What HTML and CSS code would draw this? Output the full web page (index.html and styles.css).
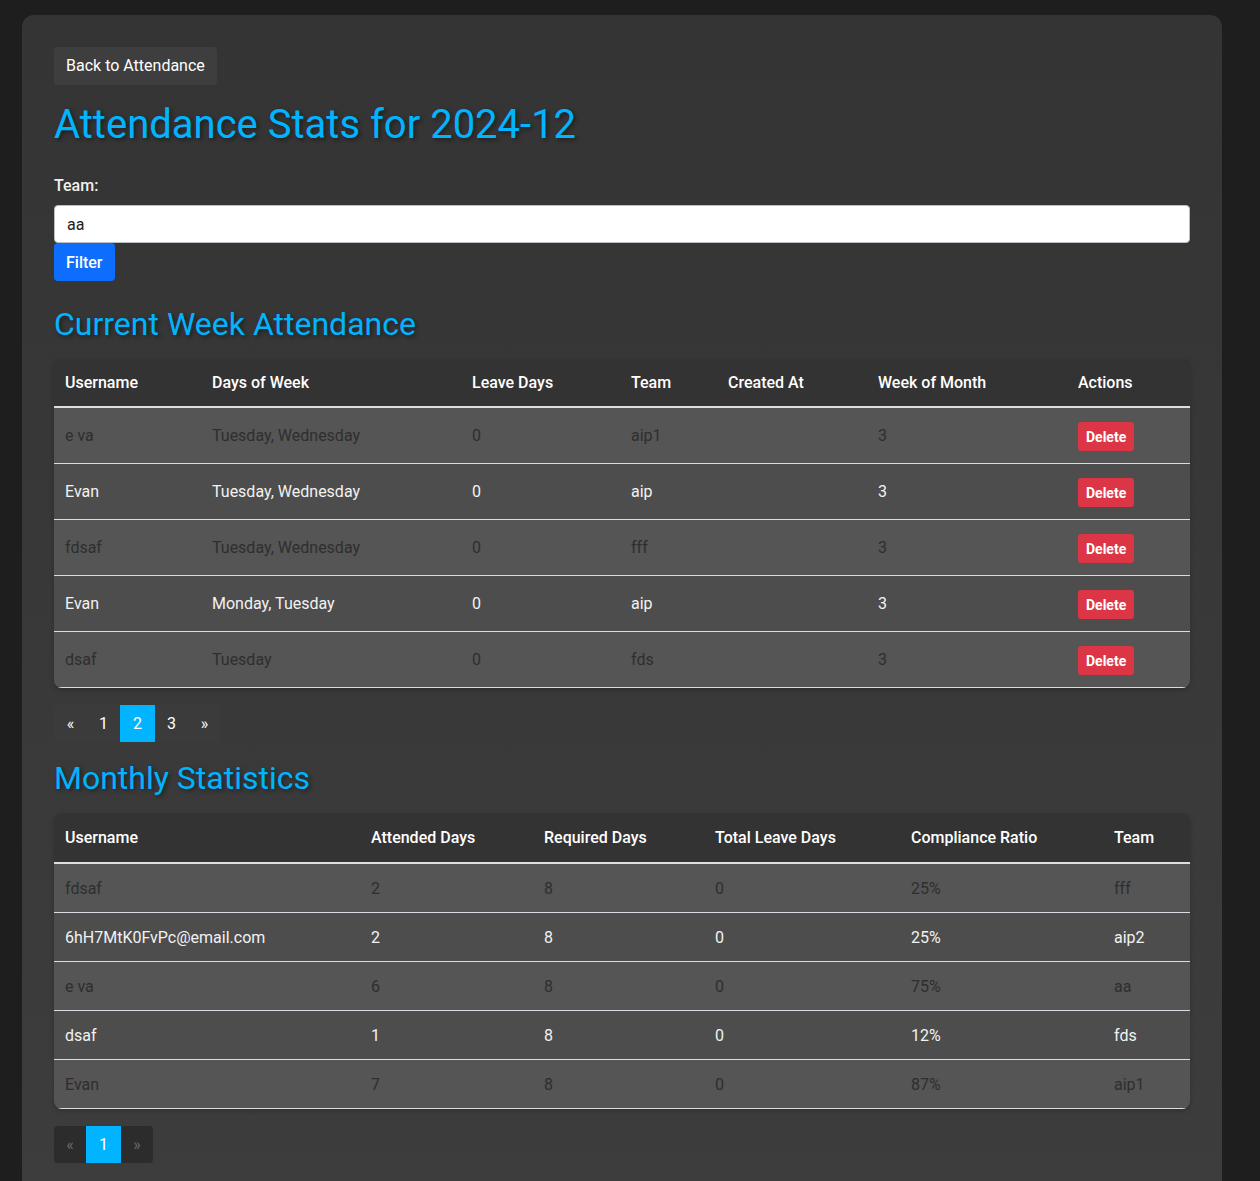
FILE: index.html
```html
<!DOCTYPE html>
<html lang="en">
<head>
<meta charset="utf-8">
<title>Attendance Stats</title>
<link rel="stylesheet" href="styles.css">
</head>
<body>
<div class="container">
  <a class="back-btn" href="#">Back to Attendance</a>
  <h1 class="title">Attendance Stats for 2024-12</h1>

  <form class="filter-form">
    <label class="label" for="team">Team:</label>
    <input class="input" id="team" type="text" value="aa">
    <button class="filter-btn" type="button">Filter</button>
  </form>

  <h2 class="section-title">Current Week Attendance</h2>
  <div class="table-wrap">
    <table class="table week">
      <thead>
        <tr>
          <th class="c1">Username</th>
          <th class="c2">Days of Week</th>
          <th class="c3">Leave Days</th>
          <th class="c4">Team</th>
          <th class="c5">Created At</th>
          <th class="c6">Week of Month</th>
          <th class="c7">Actions</th>
        </tr>
      </thead>
      <tbody>
        <tr class="odd"><td>e va</td><td>Tuesday, Wednesday</td><td>0</td><td>aip1</td><td></td><td>3</td><td><button class="del-btn">Delete</button></td></tr>
        <tr class="even"><td>Evan</td><td>Tuesday, Wednesday</td><td>0</td><td>aip</td><td></td><td>3</td><td><button class="del-btn">Delete</button></td></tr>
        <tr class="odd"><td>fdsaf</td><td>Tuesday, Wednesday</td><td>0</td><td>fff</td><td></td><td>3</td><td><button class="del-btn">Delete</button></td></tr>
        <tr class="even"><td>Evan</td><td>Monday, Tuesday</td><td>0</td><td>aip</td><td></td><td>3</td><td><button class="del-btn">Delete</button></td></tr>
        <tr class="odd"><td>dsaf</td><td>Tuesday</td><td>0</td><td>fds</td><td></td><td>3</td><td><button class="del-btn">Delete</button></td></tr>
      </tbody>
    </table>
  </div>

  <nav class="pagination">
    <a class="page" href="#">«</a>
    <a class="page" href="#">1</a>
    <a class="page active" href="#">2</a>
    <a class="page" href="#">3</a>
    <a class="page" href="#">»</a>
  </nav>

  <h2 class="section-title monthly">Monthly Statistics</h2>
  <div class="table-wrap">
    <table class="table month">
      <thead>
        <tr>
          <th class="m1">Username</th>
          <th class="m2">Attended Days</th>
          <th class="m3">Required Days</th>
          <th class="m4">Total Leave Days</th>
          <th class="m5">Compliance Ratio</th>
          <th class="m6">Team</th>
        </tr>
      </thead>
      <tbody>
        <tr class="odd"><td>fdsaf</td><td>2</td><td>8</td><td>0</td><td>25%</td><td>fff</td></tr>
        <tr class="even"><td>6hH7MtK0FvPc@email.com</td><td>2</td><td>8</td><td>0</td><td>25%</td><td>aip2</td></tr>
        <tr class="odd"><td>e va</td><td>6</td><td>8</td><td>0</td><td>75%</td><td>aa</td></tr>
        <tr class="even"><td>dsaf</td><td>1</td><td>8</td><td>0</td><td>12%</td><td>fds</td></tr>
        <tr class="odd"><td>Evan</td><td>7</td><td>8</td><td>0</td><td>87%</td><td>aip1</td></tr>
      </tbody>
    </table>
  </div>

  <nav class="pagination disabled-ends">
    <span class="page disabled">«</span>
    <a class="page active" href="#">1</a>
    <span class="page disabled">»</span>
  </nav>
</div>
</body>
</html>
```

FILE: styles.css
```css
html, body {
  margin: 0;
  padding: 0;
}

body {
  background: #1e1e1e;
  font-family: Roboto, "Liberation Sans", Arial, sans-serif;
  font-size: 16px;
  color: #f0f0f0;
  min-height: 1181px;
}

.container {
  width: 1200px;
  box-sizing: border-box;
  margin: 15px 0 0 22px;
  padding: 32px 32px 40px;
  background: linear-gradient(180deg, #343434 0%, #3d3d3d 100%);
  border-radius: 12px;
  min-height: 1200px;
}

.back-btn {
  display: inline-block;
  background: #3e3e3e;
  color: #ffffff;
  text-decoration: none;
  padding: 9px 12px 10px;
  line-height: 19px;
  border-radius: 4px;
}

.title {
  margin: 17px 0 0;
  font-size: 40px;
  line-height: 46px;
  font-weight: 400;
  color: #00b4ff;
  text-shadow: 2px 2px 4px rgba(0, 0, 0, 0.45);
}

.filter-form {
  margin-top: 28px;
  display: flex;
  flex-direction: column;
  align-items: flex-start;
}

.label {
  font-weight: 500;
  line-height: 19px;
  margin-bottom: 10px;
}

.input {
  box-sizing: border-box;
  width: 100%;
  height: 38px;
  padding: 0 12px;
  border: 1px solid #b9bdc4;
  border-radius: 4px;
  background: #ffffff;
  color: #212121;
  font-family: inherit;
  font-size: 16px;
}

.filter-btn {
  height: 38px;
  padding: 0 12px;
  background: #0d6efd;
  color: #ffffff;
  border: none;
  border-radius: 4px;
  font-family: inherit;
  font-size: 16px;
  font-weight: 500;
}

.section-title {
  margin: 24px 0 0;
  font-size: 32px;
  line-height: 38px;
  font-weight: 400;
  color: #00b4ff;
  text-shadow: 2px 2px 4px rgba(0, 0, 0, 0.45);
}

.section-title.monthly {
  margin-top: 17px;
}

.table-wrap {
  margin-top: 16px;
  border-radius: 8px;
  overflow: hidden;
  box-shadow: 0 2px 5px rgba(0, 0, 0, 0.2);
}

.table {
  width: 100%;
  border-collapse: collapse;
  font-size: 16px;
}

.table th {
  background: #333333;
  color: #ffffff;
  font-weight: 500;
  text-align: left;
  padding: 0 11px;
  height: 47px;
  border-bottom: 2px solid #dedede;
}

.table.month th {
  height: 49px;
}

.table td {
  padding: 0 11px;
  text-align: left;
  border-bottom: 1px solid #d8dde3;
}

.table.week td {
  height: 55px;
}

.table.month td {
  height: 48px;
}

.table tr.odd td {
  background: #555555;
  color: #2e2e2e;
}

.table tr.even td {
  background: #4d4d4d;
  color: #f2f2f2;
}

.c1 { width: 125px; }
.c2 { width: 238px; }
.c3 { width: 137px; }
.c4 { width: 75px; }
.c5 { width: 128px; }
.c6 { width: 178px; }

.m1 { width: 284px; }
.m2 { width: 151px; }
.m3 { width: 149px; }
.m4 { width: 174px; }
.m5 { width: 181px; }

.del-btn {
  display: inline-block;
  background: #dc3545;
  color: #ffffff;
  border: none;
  border-radius: 3px;
  font-family: inherit;
  font-size: 14px;
  font-weight: 700;
  height: 29px;
  padding: 0 8px;
  margin-top: 2px;
}

.pagination {
  display: inline-flex;
  margin-top: 17px;
  background: #3b3b3b;
  border-radius: 4px;
  overflow: hidden;
}

.page {
  display: block;
  min-width: 9px;
  padding: 9px 12px;
  line-height: 19px;
  color: #ffffff;
  text-decoration: none;
  text-align: center;
}

.page.active {
  background: #00b4ff;
  padding: 9px 13px;
}

.pagination.disabled-ends {
  background: #2c2c2c;
}

.page.disabled {
  color: #6a6a6a;
  padding: 9px 11.5px;
}
```
